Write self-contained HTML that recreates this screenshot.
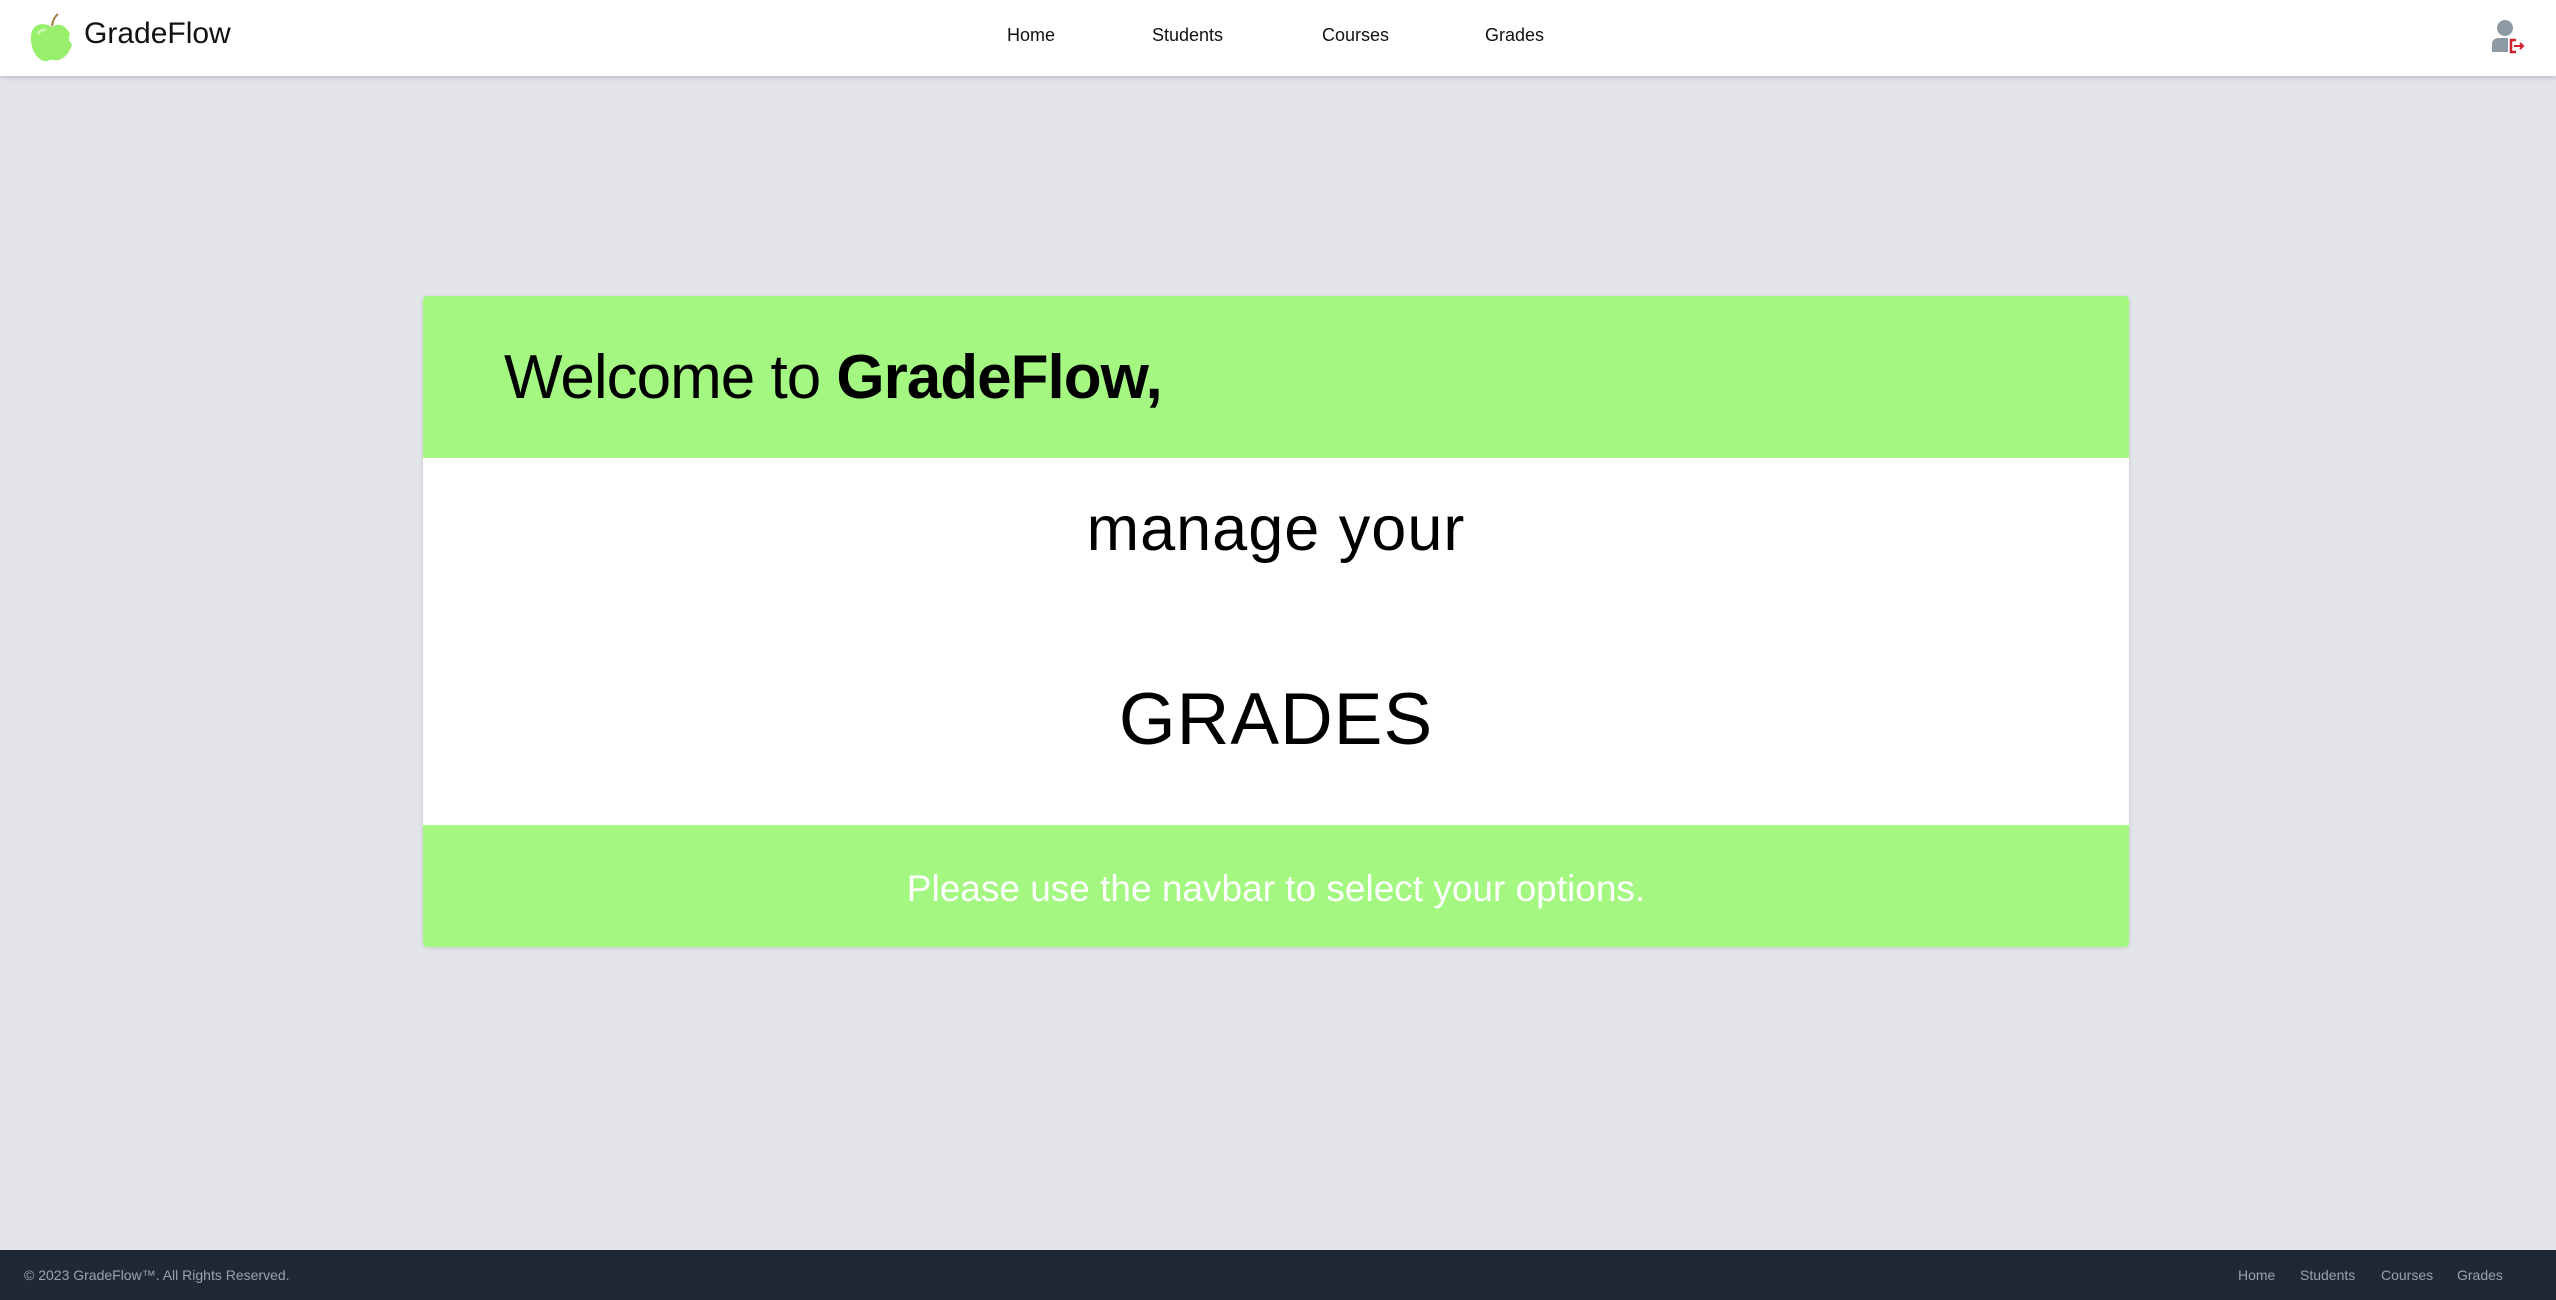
<!DOCTYPE html>
<html><head><meta charset="utf-8"><style>
*{margin:0;padding:0;box-sizing:border-box}
body{width:2556px;height:1300px;background:#e2e4ea;font-family:"Liberation Sans",sans-serif;position:relative;overflow:hidden}
.nav{position:absolute;top:0;left:0;width:2556px;height:76px;background:#fff;box-shadow:0 2px 4px rgba(0,0,0,.15)}
.logo{position:absolute;left:84px;top:17px;font-size:30px;color:#111}
.links a{position:absolute;top:25px;font-size:18px;color:#111;text-decoration:none}
.card{position:absolute;left:423px;top:296px;width:1706px;height:651px;background:#fff;border-radius:4px;box-shadow:0 1px 4px rgba(0,0,0,.12);overflow:hidden}
.top{height:162px;background:#a4f882;position:relative}
.top div{position:absolute;left:81px;top:46px;font-size:62px;color:#000;letter-spacing:-1px}
.mid1{position:absolute;top:197px;width:100%;text-align:center;font-size:63px;letter-spacing:1px}
.mid2{position:absolute;top:382px;width:100%;text-align:center;font-size:73px;letter-spacing:1px}
.bot{position:absolute;top:529px;height:122px;width:100%;background:#a4f882;color:#fff;text-align:center;font-size:37px;line-height:128px}
.foot{position:absolute;top:1250px;left:0;width:2556px;height:50px;background:#1f2936;color:#9aa1ab;font-size:14px}
.foot span{position:absolute;top:17px}
</style></head><body>
<div class="nav">
<svg style="position:absolute;left:28px;top:12px" width="48" height="52" viewBox="0 0 48 52">
<path d="M24 14 Q25 6 30 2" stroke="#a0783c" stroke-width="2" fill="none"/>
<path d="M24 15 C14 9 2 12 3 28 C4 42 12 50 19 49 C22 48 24 47 26 48 C33 50 42 42 44 32 C41 30 40 26 42 22 C38 14 32 10 24 15Z" fill="#97ef6b"/>
<path d="M10 22 C12 18 16 17 18 18" stroke="#c8f8b0" stroke-width="3" fill="none"/>
</svg>
<div class="logo">GradeFlow</div>
<div class="links"><a style="left:1007px">Home</a><a style="left:1152px">Students</a><a style="left:1322px">Courses</a><a style="left:1485px">Grades</a></div>
<svg style="position:absolute;left:2490px;top:18px" width="36" height="36" viewBox="0 0 36 36">
<circle cx="15" cy="10" r="8" fill="#8d9aa3"/>
<path d="M2 34 V26 Q2 20 10 20 H18 V34Z" fill="#8d9aa3"/>
<path d="M26 22 H21 V34 H26" stroke="#d0202a" stroke-width="2.5" fill="none"/>
<path d="M24 28 H33 M30 25 L33 28 L30 31" stroke="#d0202a" stroke-width="2" fill="none"/>
</svg>
</div>
<div class="card">
<div class="top"><div>Welcome to <b>GradeFlow,</b></div></div>
<div class="mid1">manage your</div>
<div class="mid2">GRADES</div>
<div class="bot">Please use the navbar to select your options.</div>
</div>
<div class="foot">
<span style="left:24px">© 2023 GradeFlow™. All Rights Reserved.</span>
<span style="left:2238px">Home</span><span style="left:2300px">Students</span><span style="left:2381px">Courses</span><span style="left:2457px">Grades</span>
</div>
</body></html>
